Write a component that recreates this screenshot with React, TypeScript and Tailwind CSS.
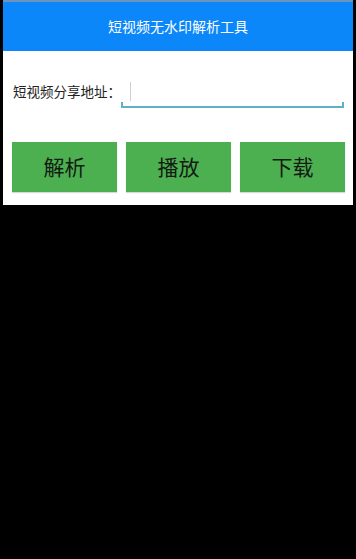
import React from 'react'

const font = { fontFamily: '"Noto Sans CJK SC", "Noto Sans", sans-serif' }

function ActionButton({ label }: { label: string }) {
  return (
    <button className="flex-1 h-[50px] bg-[#4caf50] text-[#141a14] text-[21px] flex items-center justify-center shadow-[0_1px_1px_rgba(0,0,0,0.15)]">
      {label}
    </button>
  )
}

export default function App() {
  return (
    <div className="w-[356px] h-[559px] bg-black flex flex-col px-[3px]" style={font}>
      <div className="h-[2px] bg-[#6d93bd]" />
      {/* Header */}
      <div className="h-[49px] bg-[#0b87fa] flex items-center justify-center text-white text-[14px]">
        短视频无水印解析工具
      </div>

      {/* Body */}
      <div className="h-[154px] bg-white flex flex-col">
        <div className="flex items-end pl-[10px] pr-[9px] mt-[31px]">
          <span className="w-[108px] shrink-0 text-[13.5px] leading-[18px] pb-[8px] text-[#222]">短视频分享地址：</span>
          <div className="relative flex-1 h-[26px] border-b-2 border-[#5fb0c6]">
            <div className="absolute left-[9px] top-0 h-[19px] w-px bg-[#cfcfcf]" />
            <div className="absolute left-0 bottom-0 h-[4px] w-[2px] bg-[#5fb0c6]" />
            <div className="absolute right-0 bottom-0 h-[4px] w-[2px] bg-[#5fb0c6]" />
          </div>
        </div>

        <div className="flex gap-[9px] pl-[9px] pr-[8px] mt-[34px]">
          <ActionButton label="解析" />
          <ActionButton label="播放" />
          <ActionButton label="下载" />
        </div>
      </div>
    </div>
  )
}
